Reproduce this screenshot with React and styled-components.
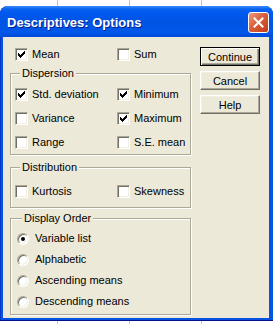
import React from 'react';
import styled, { createGlobalStyle } from 'styled-components';

const GlobalStyle = createGlobalStyle`
  html, body { margin: 0; padding: 0; }
  body {
    font-family: "Liberation Sans", Arial, sans-serif;
    font-size: 11px;
    color: #000;
  }
`;

const Desktop = styled.div`
  width: 273px;
  height: 324px;
  overflow: hidden;
  box-sizing: border-box;
  padding-top: 6px;
  background: linear-gradient(to right,
    #fff 0 57px, #c4c4c4 57px 58px,
    #fff 58px 129px, #c4c4c4 129px 130px,
    #fff 130px 201px, #c4c4c4 201px 202px, #fff 202px);
`;

const Window = styled.div`
  display: flex;
  flex-direction: column;
  width: 273px;
  background: #0553e2;
  border-radius: 8px 8px 0 0;
  box-shadow: inset 0 -1px 0 #00138c, inset 1px 0 0 #0838c8;
`;

const TitleBar = styled.div`
  height: 31px;
  box-sizing: border-box;
  display: flex;
  align-items: center;
  justify-content: space-between;
  padding: 0 4px 0 7px;
  border-radius: 8px 8px 0 0;
  background: linear-gradient(180deg,
    #3d8dfb 0px, #0a62ef 3px, #0058ee 7px, #0054e3 50%, #0157e8 85%, #004ad9 100%);
`;

const Title = styled.span`
  color: #fff;
  font-family: "Liberation Sans", Arial, sans-serif;
  font-weight: bold;
  font-size: 13px;
  text-shadow: 1px 1px 0 #0a1e8c;
  padding-top: 2px;
`;

const CloseButton = styled.div`
  width: 21px;
  height: 21px;
  box-sizing: border-box;
  border: 1px solid #fff;
  border-radius: 3px;
  background: linear-gradient(135deg, #ee9a80 0%, #d9603c 45%, #c23c16 100%);
  display: flex;
  align-items: center;
  justify-content: center;
  margin-top: 2px;
`;

const Client = styled.div`
  display: flex;
  gap: 9px;
  height: 281px;
  box-sizing: border-box;
  margin: 0 4px 3px 3px;
  padding: 11px 0 0 7px;
  background: #ece9d8;
`;

const LeftColumn = styled.div`
  display: flex;
  flex-direction: column;
  width: 181px;
`;

const Row = styled.div`
  display: flex;
  align-items: center;
  height: 13px;
  padding-left: ${(p) => p.$indent || 0}px;
`;

const Option = styled.label`
  display: flex;
  align-items: center;
  gap: ${(p) => p.$gap || 4}px;
  width: ${(p) => (p.$width ? `${p.$width}px` : 'auto')};
  height: 13px;
  line-height: 13px;
  white-space: nowrap;
`;

const Box = styled.span`
  position: relative;
  flex: none;
  width: 13px;
  height: 13px;
  box-sizing: border-box;
  background: #fff;
  border: 1px solid;
  border-color: #aca899 #fff #fff #aca899;
  box-shadow: inset 1px 1px 0 #716f64, inset -1px -1px 0 #f1efe2;
  display: flex;
  align-items: center;
  justify-content: center;
`;

const Round = styled.span`
  flex: none;
  width: 12px;
  height: 12px;
  box-sizing: border-box;
  border-radius: 50%;
  background: #fff;
  border: 1px solid;
  border-color: #aca899 #fff #fff #aca899;
  box-shadow: inset 1px 1px 0 #716f64, inset -1px -1px 0 #f1efe2;
  display: flex;
  align-items: center;
  justify-content: center;
`;

const Dot = styled.span`
  width: 4px;
  height: 4px;
  border-radius: 50%;
  background: #000;
`;

const Group = styled.fieldset`
  margin: ${(p) => p.$top}px 0 0;
  padding: ${(p) => p.$pad};
  border: 1px solid #aca899;
  box-shadow: inset 1px 1px 0 #fff, 1px 1px 0 #fff;
  min-inline-size: 0;
  display: flex;
  flex-direction: column;
  gap: ${(p) => p.$gap}px;
`;

const Legend = styled.legend`
  margin-left: 5px;
  padding: 0 2px;
  line-height: 13px;
  background: #ece9d8;
`;

const ButtonColumn = styled.div`
  display: flex;
  flex-direction: column;
  gap: 5px;
  margin-top: -1px;
`;

const Button = styled.button`
  width: 60px;
  height: 19px;
  box-sizing: border-box;
  padding: 0;
  font-family: "Liberation Sans", Arial, sans-serif;
  font-size: 11px;
  color: #000;
  background: #ece9d8;
  border: 1px solid;
  border-color: ${(p) => (p.$default ? '#000' : '#fff #716f64 #716f64 #fff')};
  box-shadow: ${(p) =>
    p.$default
      ? 'inset 1px 1px 0 #fff, inset -1px -1px 0 #716f64, inset -2px -2px 0 #aca899'
      : 'inset -1px -1px 0 #aca899, inset 1px 1px 0 #f1efe2'};
`;

const CHECK = ['......X', '.....XX', 'X...XXX', 'XX.XXX.', 'XXXXX..', '.XXX...', '..X....'];

function CheckMark() {
  return (
    <svg width="7" height="7" viewBox="0 0 7 7" shapeRendering="crispEdges">
      {CHECK.flatMap((line, y) =>
        line.split('').map((c, x) => (c === 'X' ? <rect key={`${x}-${y}`} x={x} y={y} width="1" height="1" fill="#000" /> : null))
      )}
    </svg>
  );
}

function Check({ label, checked, width }) {
  return (
    <Option $width={width}>
      <Box>{checked && <CheckMark />}</Box>
      <span>{label}</span>
    </Option>
  );
}

function Radio({ label, selected }) {
  return (
    <Option $gap={6}>
      <Round>{selected && <Dot />}</Round>
      <span>{label}</span>
    </Option>
  );
}

export default function App() {
  return (
    <>
      <GlobalStyle />
      <Desktop>
        <Window>
          <TitleBar>
            <Title>Descriptives: Options</Title>
            <CloseButton>
              <svg width="11" height="11" viewBox="0 0 11 11">
                <path d="M1.5 1.5 L9.5 9.5 M9.5 1.5 L1.5 9.5" stroke="#fff" strokeWidth="2" strokeLinecap="square" />
              </svg>
            </CloseButton>
          </TitleBar>
          <Client>
            <LeftColumn>
              <Row $indent={5}>
                <Check label="Mean" checked width={102} />
                <Check label="Sum" />
              </Row>
              <Group $top={6} $pad="8px 0 5px 4px" $gap={11}>
                <Legend>Dispersion</Legend>
                <Row>
                  <Check label="Std. deviation" checked width={102} />
                  <Check label="Minimum" checked />
                </Row>
                <Row>
                  <Check label="Variance" width={102} />
                  <Check label="Maximum" checked />
                </Row>
                <Row>
                  <Check label="Range" width={102} />
                  <Check label="S.E. mean" />
                </Row>
              </Group>
              <Group $top={6} $pad="11px 0 9px 4px" $gap={0}>
                <Legend>Distribution</Legend>
                <Row>
                  <Check label="Kurtosis" width={102} />
                  <Check label="Skewness" />
                </Row>
              </Group>
              <Group $top={4} $pad="7px 0 6px 6px" $gap={8}>
                <Legend>Display Order</Legend>
                <Radio label="Variable list" selected />
                <Radio label="Alphabetic" />
                <Radio label="Ascending means" />
                <Radio label="Descending means" />
              </Group>
            </LeftColumn>
            <ButtonColumn>
              <Button $default>Continue</Button>
              <Button>Cancel</Button>
              <Button>Help</Button>
            </ButtonColumn>
          </Client>
        </Window>
      </Desktop>
    </>
  );
}
